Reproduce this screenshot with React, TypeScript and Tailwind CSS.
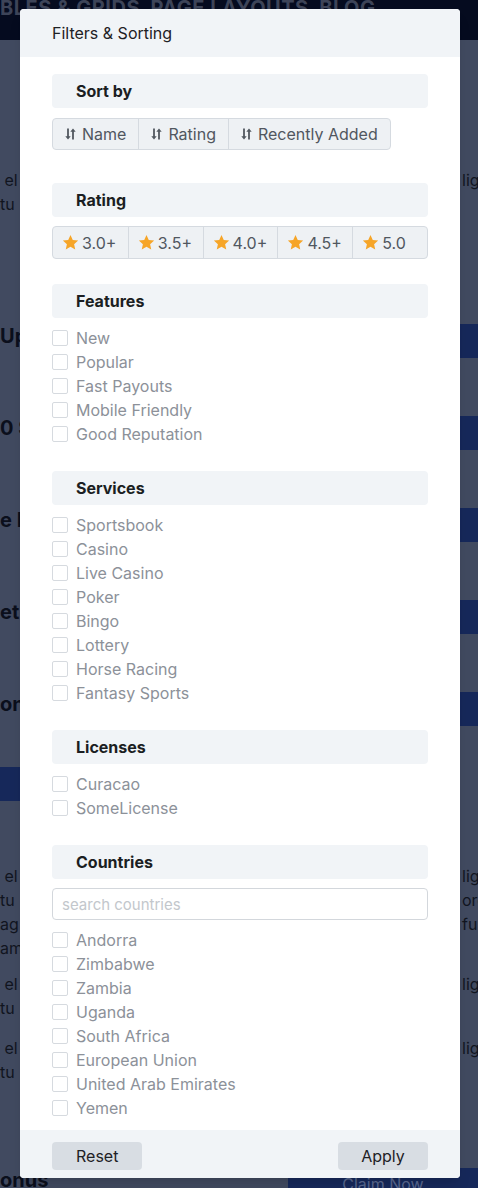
import React from 'react';

const features = ['New', 'Popular', 'Fast Payouts', 'Mobile Friendly', 'Good Reputation'];
const services = ['Sportsbook', 'Casino', 'Live Casino', 'Poker', 'Bingo', 'Lottery', 'Horse Racing', 'Fantasy Sports'];
const licenses = ['Curacao', 'SomeLicense'];
const countries = ['Andorra', 'Zimbabwe', 'Zambia', 'Uganda', 'South Africa', 'European Union', 'United Arab Emirates', 'Yemen'];
const ratings = ['3.0+', '3.5+', '4.0+', '4.5+', '5.0'];

function SortIcon() {
  return (
    <svg width="11" height="12" viewBox="0 0 11 12" className="shrink-0">
      <path d="M3 0.5v9" stroke="currentColor" strokeWidth="1.8" />
      <path d="M0.3 8.2 3 11.6 5.7 8.2z" fill="currentColor" />
      <path d="M8 11.5v-9" stroke="currentColor" strokeWidth="1.8" />
      <path d="M5.3 3.8 8 0.4 10.7 3.8z" fill="currentColor" />
    </svg>
  );
}

function Star() {
  return (
    <svg width="17" height="17" viewBox="0 0 24 24" className="shrink-0">
      <path
        d="M12 1.5l3.2 7 7.6.8-5.7 5.1 1.6 7.5L12 18l-6.7 3.9 1.6-7.5L1.2 9.3l7.6-.8z"
        fill="#f6a528"
      />
    </svg>
  );
}

function SectionTitle({ children }: { children: React.ReactNode }) {
  return (
    <div className="flex h-[34px] items-center rounded bg-[#f1f4f7] px-6 pb-px text-base font-bold text-[#1b1e22]">
      {children}
    </div>
  );
}

function CheckList({ items }: { items: string[] }) {
  return (
    <div className="flex flex-col">
      {items.map((item) => (
        <label key={item} className="flex h-6 items-center gap-2">
          <span className="h-4 w-4 rounded-[2px] border border-[#d6dadf] bg-white" />
          <span className="text-base text-[#8c9199]">{item}</span>
        </label>
      ))}
    </div>
  );
}

function BgRow({ h, left, right, leftBar, rightBar, bold }: {
  h: number;
  left?: string[];
  right?: string[];
  leftBar?: boolean;
  rightBar?: boolean;
  bold?: boolean;
}) {
  return (
    <div className="flex justify-between" style={{ height: h }}>
      <div className={leftBar ? 'w-[20px] bg-[#16285a]' : 'flex w-[20px] flex-col overflow-hidden'}>
        {left?.map((t, i) => (
          <div key={i} className={bold ? 'h-6 whitespace-nowrap text-[20px] font-bold leading-6 text-[#0b0f1c]' : 'h-6 whitespace-nowrap text-base leading-6 text-[#11151f]'}>
            {t}
          </div>
        ))}
      </div>
      <div className={rightBar ? 'w-[18px] bg-[#16285a]' : 'flex w-[18px] flex-col overflow-hidden pl-[2px]'}>
        {right?.map((t, i) => (
          <div key={i} className="h-6 whitespace-nowrap text-base leading-6 text-[#11151f]">
            {t}
          </div>
        ))}
      </div>
    </div>
  );
}

export default function App() {
  return (
    <div className="relative h-[1188px] w-[478px] overflow-hidden bg-[#414a60] font-['Inter',sans-serif]">
      {/* page behind the dialog */}
      <div className="flex flex-col">
        <div className="h-[40px] overflow-hidden bg-[#050b1f]">
          <div className="-mt-[7px] whitespace-nowrap text-[20px] font-bold tracking-wide text-[#3d4458]">
            BLES &amp; GRIDS&nbsp;&nbsp;PAGE LAYOUTS&nbsp;&nbsp;BLOG
          </div>
        </div>
        <div className="h-[128px]" />
        <BgRow h={56} left={['\u00a0el', 'tu']} right={['lig']} />
        <div className="h-[100px]" />
        <BgRow h={34} left={['Up']} rightBar bold />
        <div className="h-[58px]" />
        <BgRow h={34} left={['0 S']} rightBar bold />
        <div className="h-[58px]" />
        <BgRow h={34} left={['e B']} rightBar bold />
        <div className="h-[58px]" />
        <BgRow h={34} left={['et']} rightBar bold />
        <div className="h-[58px]" />
        <BgRow h={34} left={['on']} rightBar bold />
        <div className="h-[41px]" />
        <BgRow h={34} leftBar />
        <div className="h-[63px]" />
        <BgRow h={108} left={['\u00a0el', 'tu', 'ag', 'am']} right={['lig', 'ore', 'fu']} />
        <BgRow h={64} left={['\u00a0el', 'tu']} right={['lig']} />
        <BgRow h={132} left={['\u00a0el', 'tu']} right={['lig']} />
        <div className="flex h-[20px] items-start justify-between">
          <div className="whitespace-nowrap text-[20px] font-bold leading-6 text-[#0b0f1c]">onus</div>
          <div className="flex h-[20px] w-[190px] items-start justify-center bg-[#16285a] pt-[6px] text-base leading-5 text-[#5a6890]">
            Claim Now
          </div>
        </div>
      </div>

      {/* dialog */}
      <div className="absolute left-[20px] top-[9px] w-[440px] overflow-hidden rounded bg-white shadow-lg">
        <div className="flex h-[48px] items-center bg-[#f1f4f7] px-8 pb-px text-base text-[#1e2125]">
          Filters &amp; Sorting
        </div>

        <div className="flex flex-col px-8 pb-[10px] pt-[17px]">
          <SectionTitle>Sort by</SectionTitle>
          <div className="mt-[10px] flex self-start overflow-hidden rounded border border-[#d5dae0] bg-[#eef1f4] text-base text-[#51575f]">
            {['Name', 'Rating', 'Recently Added'].map((label, i) => (
              <button
                key={label}
                type="button"
                className={`flex h-[30px] items-center gap-[6px] px-[12px] pb-px ${i > 0 ? 'border-l border-[#d5dae0]' : ''}`}
              >
                <SortIcon />
                {label}
              </button>
            ))}
          </div>

          <div className="mt-[33px]">
            <SectionTitle>Rating</SectionTitle>
          </div>
          <div className="mt-[9px] grid grid-cols-5 overflow-hidden rounded border border-[#d5dae0] bg-[#eef1f4] text-base text-[#51575f]">
            {ratings.map((r, i) => (
              <button
                key={r}
                type="button"
                className={`flex h-[31px] items-center gap-[3px] pl-[9px] ${i > 0 ? 'border-l border-[#d5dae0]' : ''}`}
              >
                <Star />
                {r}
              </button>
            ))}
          </div>

          <div className="mt-[25px]">
            <SectionTitle>Features</SectionTitle>
          </div>
          <div className="mt-[8px]">
            <CheckList items={features} />
          </div>

          <div className="mt-[25px]">
            <SectionTitle>Services</SectionTitle>
          </div>
          <div className="mt-[8px]">
            <CheckList items={services} />
          </div>

          <div className="mt-[25px]">
            <SectionTitle>Licenses</SectionTitle>
          </div>
          <div className="mt-[8px]">
            <CheckList items={licenses} />
          </div>

          <div className="mt-[25px]">
            <SectionTitle>Countries</SectionTitle>
          </div>
          <input
            type="text"
            placeholder="search countries"
            className="mt-[9px] h-[32px] rounded border border-[#d3d7dc] px-[9px] text-[15px] text-[#333] outline-none placeholder:text-[#c3c7cc]"
          />
          <div className="mt-[8px]">
            <CheckList items={countries} />
          </div>
        </div>

        <div className="flex justify-between bg-[#f1f4f7] px-8 pb-[8px] pt-[12px]">
          <button type="button" className="h-[28px] rounded bg-[#d8dde3] px-6 text-base text-[#1e2125]">
            Reset
          </button>
          <button type="button" className="h-[28px] w-[90px] rounded bg-[#d8dde3] text-base text-[#1e2125]">
            Apply
          </button>
        </div>
      </div>
    </div>
  );
}
